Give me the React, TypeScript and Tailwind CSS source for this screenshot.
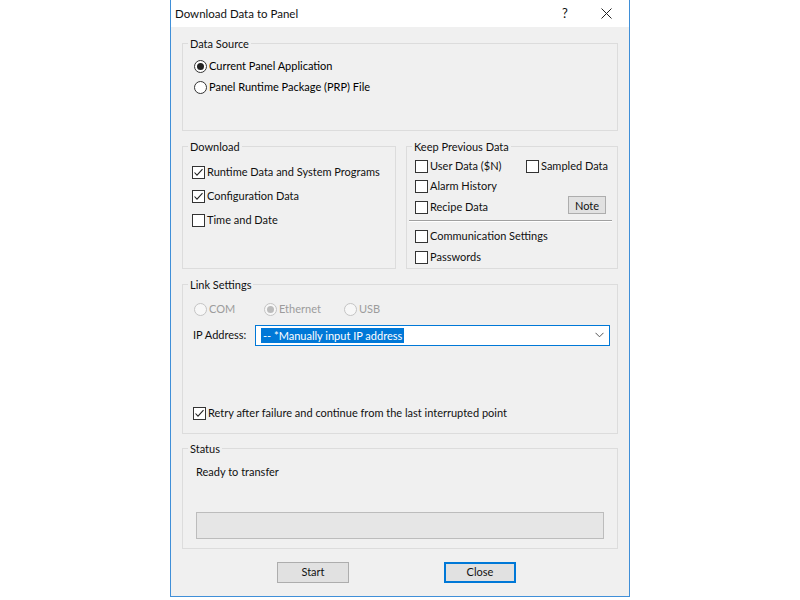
import type { ReactNode } from 'react';

function Radio({
  checked = false,
  disabled = false,
  label,
  className = '',
}: {
  checked?: boolean;
  disabled?: boolean;
  label: string;
  className?: string;
}) {
  return (
    <div className={`flex items-center h-[20px] gap-[2px] whitespace-nowrap ${className}`}>
      <span
        className={`w-[13px] h-[13px] rounded-full border flex items-center justify-center shrink-0 ${
          disabled ? 'border-[#c4c4c4] bg-[#f7f7f7]' : 'border-[#333333] bg-white'
        }`}>
        {checked && (
          <span
            className={`w-[7px] h-[7px] rounded-full ${disabled ? 'bg-[#bcbcbc]' : 'bg-[#222222]'}`}
          />
        )}
      </span>
      <span className={disabled ? 'text-[#9c9c9c]' : 'text-black'}>{label}</span>
    </div>
  );
}

function Check({
  checked = false,
  label,
  className = '',
}: {
  checked?: boolean;
  label: string;
  className?: string;
}) {
  return (
    <div className={`flex items-center h-[20px] gap-[2px] whitespace-nowrap ${className}`}>
      <span className="w-[13px] h-[13px] border border-[#333333] bg-white flex items-center justify-center shrink-0">
        {checked && (
          <svg width="11" height="11" viewBox="0 0 11 11">
            <polyline
              points="1.5,5.5 4,8.2 9.5,2.2"
              fill="none"
              stroke="#222"
              strokeWidth="1.1"
            />
          </svg>
        )}
      </span>
      <span>{label}</span>
    </div>
  );
}

function Group({
  title,
  className = '',
  children,
}: {
  title: string;
  className?: string;
  children: ReactNode;
}) {
  return (
    <fieldset className={`border border-[#dcdcdc] min-w-0 ${className}`}>
      <legend className="ml-[5px] px-[2px] leading-[15px]">{title}</legend>
      {children}
    </fieldset>
  );
}

export default function App() {
  return (
    <div className="w-[800px] h-[600px] bg-white flex font-['Lato','Liberation_Sans',sans-serif] text-[11px] text-[#111]">
      <div className="ml-[170px] w-[460px] h-[597px] border-x border-b border-[#3f8fd8] flex flex-col">
        {/* Title bar */}
        <div className="h-[27px] bg-white flex items-center pl-[4px] shrink-0">
          <span className="flex-1 text-[11.5px]">Download Data to Panel</span>
          <span className="text-[13px] w-[20px] text-center mr-[26px]">?</span>
          <svg width="11" height="11" viewBox="0 0 11 11" className="mr-[17px]">
            <path d="M0.5 0.5 L10.5 10.5 M10.5 0.5 L0.5 10.5" stroke="#222" strokeWidth="1" />
          </svg>
        </div>

        {/* Body */}
        <div className="flex-1 bg-[#f0f0f0] px-[11px] pt-[9px] flex flex-col">
          <Group title="Data Source" className="h-[95px]">
            <div className="pl-[11px] pt-[5px] flex flex-col gap-[1px]">
              <Radio checked label="Current Panel Application" />
              <Radio label="Panel Runtime Package (PRP) File" />
            </div>
          </Group>

          <div className="flex gap-[10px] mt-[8px]">
            <Group title="Download" className="w-[214px] h-[130px]">
              <div className="pl-[9px] pt-[8px] flex flex-col gap-[4px]">
                <Check checked label="Runtime Data and System Programs" />
                <Check checked label="Configuration Data" />
                <Check label="Time and Date" />
              </div>
            </Group>

            <Group title="Keep Previous Data" className="flex-1 h-[130px]">
              <div className="pt-[2px] flex flex-col">
                <div className="flex pl-[8px]">
                  <Check label="User Data ($N)" className="w-[111px]" />
                  <Check label="Sampled Data" />
                </div>
                <Check label="Alarm History" className="pl-[8px]" />
                <div className="flex items-center justify-between pl-[8px] pr-[11px]">
                  <Check label="Recipe Data" />
                  <button className="w-[38px] h-[18px] mb-[5px] bg-[#e1e1e1] border border-[#adadad] leading-none">
                    Note
                  </button>
                </div>
                <div className="ml-[2px] mr-[5px] mt-[1px] border-t border-[#a0a0a0] border-b border-b-white" />
                <div className="flex flex-col pl-[8px] mt-[4px] gap-[1px]">
                  <Check label="Communication Settings" />
                  <Check label="Passwords" />
                </div>
              </div>
            </Group>
          </div>

          <Group title="Link Settings" className="h-[157px] mt-[8px]">
            <div className="pl-[10px] pr-[7px] pt-[7px] flex flex-col">
              <div className="flex pl-[1px]">
                <Radio disabled label="COM" className="w-[70px]" />
                <Radio disabled checked label="Ethernet" className="w-[80px]" />
                <Radio disabled label="USB" />
              </div>
              <div className="flex items-center mt-[6px] h-[20px]">
                <span className="w-[62px]">IP Address:</span>
                <div className="flex-1 h-[21px] bg-white border border-[#0078d7] flex items-center pl-[5px] pr-[5px]">
                  <span className="bg-[#0078d7] text-white px-[2px] leading-[15px]">
                    -- *Manually input IP address
                  </span>
                  <span className="flex-1" />
                  <svg width="9" height="6" viewBox="0 0 9 6">
                    <polyline points="0.5,0.8 4.5,4.8 8.5,0.8" fill="none" stroke="#555" strokeWidth="1" />
                  </svg>
                </div>
              </div>
              <Check checked label="Retry after failure and continue from the last interrupted point" className="mt-[58px]" />
            </div>
          </Group>

          <Group title="Status" className="h-[108px] mt-[7px]">
            <div className="pl-[13px] pt-[6px] flex flex-col">
              <div className="h-[20px] flex items-center">Ready to transfer</div>
              <div className="w-[408px] h-[27px] mt-[30px] bg-[#e6e6e6] border border-[#bcbcbc]" />
            </div>
          </Group>

          <div className="flex mt-[13px] pl-[95px] gap-[95px]">
            <button className="w-[72px] h-[21px] bg-[#e1e1e1] border border-[#adadad]">Start</button>
            <button className="w-[72px] h-[21px] bg-[#e1e1e1] border-2 border-[#0078d7]">Close</button>
          </div>
        </div>
      </div>
    </div>
  );
}
